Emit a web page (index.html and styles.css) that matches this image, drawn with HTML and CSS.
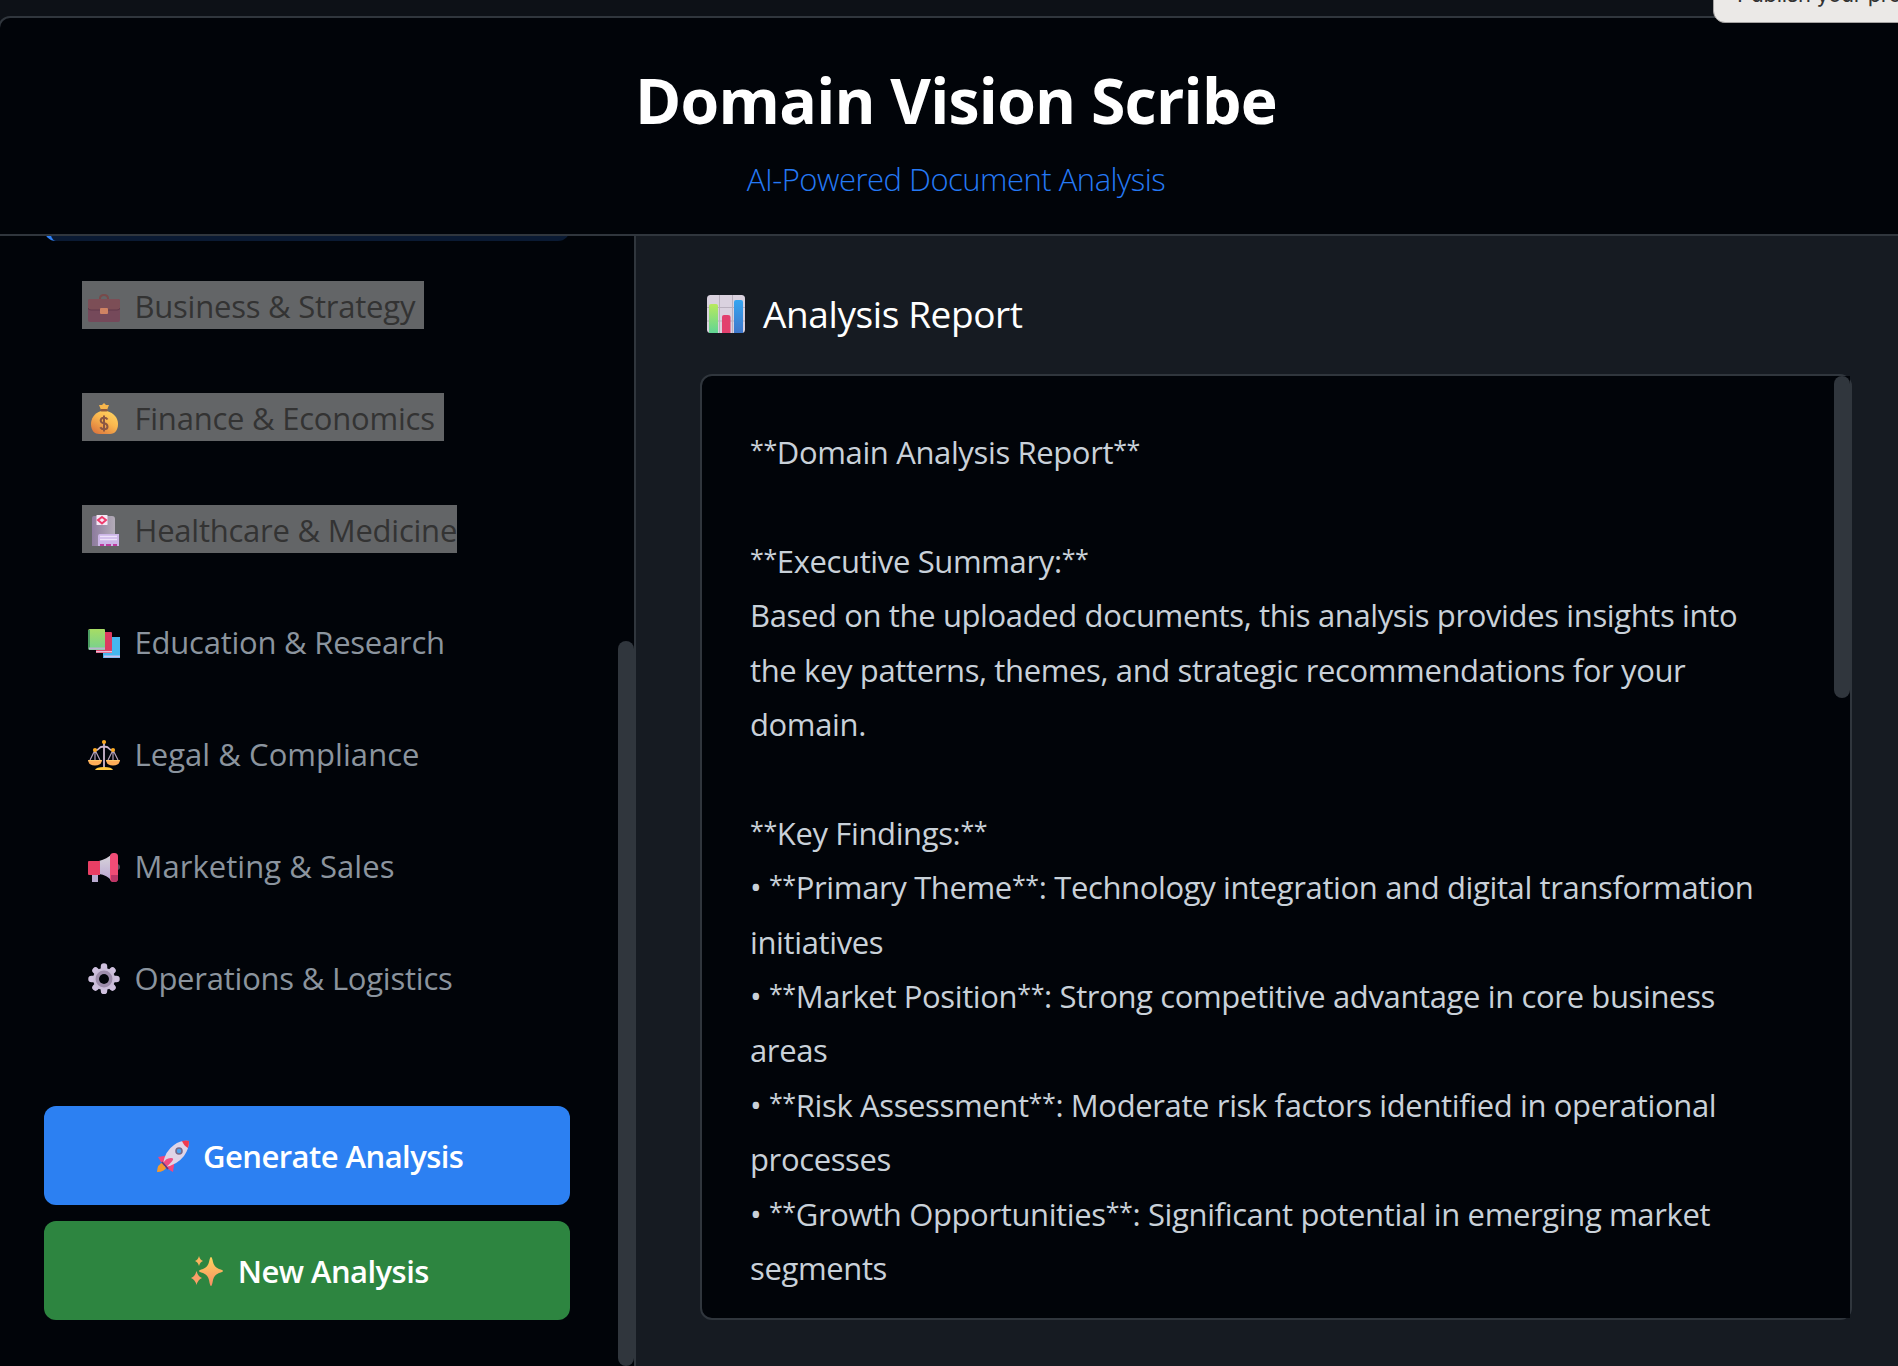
FILE: index.html
```html
<!DOCTYPE html>
<html lang="en">
<head>
  <meta charset="UTF-8">
  <meta name="viewport" content="width=device-width, initial-scale=1.0">
  <title>Domain Vision Scribe</title>
  <link rel="stylesheet" href="styles.css">
</head>
<body>
  <div class="container">
    <header class="header">
      <h1>Domain Vision Scribe</h1>
      <p class="subtitle">AI-Powered Document Analysis</p>
    </header>

    <div class="main">
      <aside class="sidebar">
        <div class="sidebar-content">
          <ul class="domain-list">
            <li class="domain-item active"></li>
            <li class="domain-item">
              <span class="label selected">
                <svg class="icon" viewBox="0 0 32 32">
                  <path d="M12 10V8.500Q12 5 16 5T20 8.500V10" fill="none" stroke="#784a4a" stroke-width="2"/>
                  <rect y="9" width="32" height="23" rx="2" fill="#75495a"/>
                  <path d="M0 11Q0 9 2 9H30Q32 9 32 11V18Q32 20 29 20H3Q0 20 0 18Z" fill="#7c4e56"/>
                  <path d="M0 18Q0 20 3 20H29Q32 20 32 18" fill="none" stroke="#60394a"/>
                  <rect x="12" y="18" width="8" height="6" rx="1" fill="#cf8363"/>
                </svg>
                Business &amp; Strategy
              </span>
            </li>
            <li class="domain-item">
              <span class="label selected">
                <svg class="icon" viewBox="0 0 32 32">
                  <defs>
                    <linearGradient id="bag" x1="1" y1="0" x2="0.300" y2="1">
                      <stop offset="0" stop-color="#ffd865"/>
                      <stop offset="0.500" stop-color="#fab84f"/>
                      <stop offset="1" stop-color="#df7c3e"/>
                    </linearGradient>
                  </defs>
                  <path d="M11 3L14 3L16 1L18 3L21 3L19 8H13Z" fill="#f7b64c"/>
                  <path d="M13 9C6 11 3 17 3 22C3 29 7 32 11 32H22C27 32 30 28 30 22C30 16 26 11 19 9Z" fill="url(#bag)"/>
                  <rect x="12.500" y="7" width="7" height="2.500" rx="1" fill="#8e5940"/>
                  <path d="M19.500 17.500Q18.500 15.700 16 15.700Q12.700 15.700 12.700 18.500Q12.700 20.700 16 21.300Q19.500 22 19.500 24.700Q19.500 27.300 16 27.300Q13.300 27.300 12.300 25.300M16 13.500V29.500" fill="none" stroke="#8b5743" stroke-width="2"/>
                </svg>
                Finance &amp; Economics
              </span>
            </li>
            <li class="domain-item">
              <span class="label selected last">
                <svg class="icon" viewBox="0 0 32 32">
                  <defs>
                    <linearGradient id="tower">
                      <stop offset="0" stop-color="#8d7b9e"/>
                      <stop offset="1" stop-color="#b3acb8"/>
                    </linearGradient>
                  </defs>
                  <path d="M4 4Q4 2 6 2H24Q27 2 27 5V32H4Z" fill="url(#tower)"/>
                  <path d="M10 22Q10 20 12 20H31V32H10Z" fill="#cdb6e8"/>
                  <path d="M12 22.500H29M12 25.500H29" stroke="#eee2fa" stroke-width="1.500"/>
                  <path d="M12 30H16V32H12ZM18 30H23V32H18ZM25 30H29V32H25Z" fill="#bd3ca0"/>
                  <rect x="8.500" y="1" width="11" height="10" rx="0.500" fill="#f4e8f5"/>
                  <path d="M14 3L18 6L14 9.500L10 6Z" fill="none" stroke="#ee3d6e" stroke-width="2"/>
                </svg>
                Healthcare &amp; Medicine
              </span>
            </li>
            <li class="domain-item">
              <span class="label">
                <svg class="icon" viewBox="0 0 32 32">
                  <defs>
                    <linearGradient id="book" x2="0" y2="1">
                      <stop offset="0" stop-color="#a7dc64"/>
                      <stop offset="1" stop-color="#75d18f"/>
                    </linearGradient>
                  </defs>
                  <path d="M15 13Q15 11 17 11H32V32H15Z" fill="#45b7ef"/>
                  <path d="M16 30.500H32" stroke="#c8bfec" stroke-width="2"/>
                  <path d="M8 8Q8 6 10 6H23Q24 6 24 7V27H8Z" fill="#dd3b60"/>
                  <path d="M8 25.700H24" stroke="#e8bfda" stroke-width="1.500"/>
                  <path d="M0 5Q0 3 2 3H16Q17 3 17 4V24H2Q0 24 0 22Z" fill="url(#book)"/>
                  <path d="M1 4V23" stroke="#4b9d61" stroke-width="2"/>
                  <path d="M1 22.500H17" stroke="#b9b5cf" stroke-width="2"/>
                </svg>
                Education &amp; Research
              </span>
            </li>
            <li class="domain-item wide">
              <span class="label">
                <svg class="icon" viewBox="0 0 32 32">
                  <path d="M16 4V31M7 12Q9 13 11 10.500T16 9Q19 8 21 10.500T25 12" fill="none" stroke="#cdb8cf" stroke-width="1.800"/>
                  <path d="M7 12L2 22M7 12V22M7 12L12 22M25 12L20 22M25 12V22M25 12L30 22" stroke="#b3a0b8" stroke-width="1.200" fill="none"/>
                  <path d="M0 22H14Q14 27 7 27.500Q0 27 0 22ZM18 22H32Q32 27 25 27.500Q18 27 18 22Z" fill="#ffae58"/>
                  <path d="M0.500 22.500H13.500M18.500 22.500H31.500" stroke="#ffc86d"/>
                  <path d="M7 32Q8 29 16 29T25 32Z" fill="#ffc83f"/>
                  <circle cx="16" cy="4" r="2.100" fill="#f9a923"/>
                  <circle cx="7" cy="12" r="2.100" fill="#f9a923"/>
                  <circle cx="25" cy="12" r="2.100" fill="#f9a923"/>
                </svg>
                Legal &amp; Compliance
              </span>
            </li>
            <li class="domain-item wide">
              <span class="label">
                <svg class="icon" viewBox="0 0 32 32">
                  <defs>
                    <linearGradient id="horn" x2="0" y2="1">
                      <stop offset="0" stop-color="#d9d6da"/>
                      <stop offset="1" stop-color="#b9a5d2"/>
                    </linearGradient>
                  </defs>
                  <circle cx="29" cy="17" r="3" fill="#554a59"/>
                  <rect x="4" y="24" width="6" height="8" fill="#b9abd0"/>
                  <path d="M11 11Q19 9 24 4V31Q19 25 11 24Z" fill="url(#horn)"/>
                  <path d="M0 12Q0 11 1 11H12V25H1Q0 25 0 24Z" fill="#e83f64"/>
                  <rect x="22" y="3" width="8" height="29" rx="3.500" fill="#f04c76"/>
                  <path d="M23 25H30V28Q30 32 26 32Q23 32 23 29Z" fill="#bb3567"/>
                </svg>
                Marketing &amp; Sales
              </span>
            </li>
            <li class="domain-item">
              <span class="label">
                <svg class="icon" viewBox="0 0 32 32">
                  <g stroke="#cfc1df" stroke-width="6.500" stroke-linecap="round">
                    <path d="M16 4.500V29M3.500 17H28.500"/>
                    <path d="M7.500 8.500L24.500 25.500M24.500 8.500L7.500 25.500"/>
                  </g>
                  <circle cx="16" cy="17" r="11" fill="#cabdd9"/>
                  <circle cx="16" cy="17" r="6.700" fill="none" stroke="#9d8dab" stroke-width="3.500"/>
                  <circle cx="16" cy="17" r="5" fill="#010409"/>
                </svg>
                Operations &amp; Logistics
              </span>
            </li>
          </ul>

          <div class="actions">
            <button class="btn btn-primary">
              <svg class="icon" viewBox="0 0 32 32">
                <path d="M7 22Q0 24 0 32Q8 32 10 26Z" fill="#f49a2e"/>
                <path d="M1 17L13 15L10 23L4 22ZM9 25L18 18L16 32L11 29Z" fill="#f5457b"/>
                <path d="M6 24Q8 11 17 5Q24 0 32 1Q32 9 27 16Q20 25 8 27Z" fill="#dfd4e7"/>
                <path d="M25 1Q29 0 32 1Q32 5 31 8Q27 6 25 1Z" fill="#ef3b4e"/>
                <path d="M6 24Q8 18 14 18T9 27Z" fill="#f04d83"/>
                <circle cx="22" cy="11" r="3" fill="#4ba2ef" stroke="#74698b" stroke-width="1.600"/>
                <path d="M5 22L11 29" stroke="#633b7a" stroke-width="1.800"/>
              </svg>
              Generate Analysis
            </button>
            <button class="btn btn-success">
              <svg class="icon" viewBox="0 0 32 32">
                <defs>
                  <linearGradient id="spark" x2="0" y2="1">
                    <stop offset="0" stop-color="#ffd45f"/>
                    <stop offset="1" stop-color="#f98e63"/>
                  </linearGradient>
                </defs>
                <path d="M20 2Q21 2 22 7Q23 12 28 14Q32 15 32 16T28 18Q23 20 22 25Q21 31 20 31T18 25Q17 20 12 18Q8 17 8 16T12 14Q17 12 18 7Q19 2 20 2Z" fill="url(#spark)"/>
                <path d="M8 1Q9 5 12 6Q9 7 8 11Q7 7 4 6Q7 5 8 1Z" fill="#fbb35f"/>
                <path d="M5.500 16Q7 21.500 11 23Q7 24.500 5.500 30Q4 24.500 0 23Q4 21.500 5.500 16Z" fill="#fb9f68"/>
              </svg>
              New Analysis
            </button>
          </div>
        </div>
        <div class="scroll-track">
          <div class="scroll-thumb sidebar-thumb"></div>
        </div>
      </aside>

      <section class="content">
        <h2>
          <svg class="icon" viewBox="0 0 38 38">
            <defs>
              <linearGradient id="barGreen" x2="0" y2="1">
                <stop offset="0" stop-color="#b8e95e"/>
                <stop offset="1" stop-color="#61d595"/>
              </linearGradient>
              <linearGradient id="barBlue" x2="0" y2="1">
                <stop offset="0" stop-color="#36a5f0"/>
                <stop offset="1" stop-color="#3f77ca"/>
              </linearGradient>
            </defs>
            <rect width="38" height="38" rx="3.500" fill="#dad2df"/>
            <path d="M0 12.500H38M0 26H38M12.500 0V38M25.500 0V38" stroke="#b9b0be"/>
            <path d="M2 38V11Q2 9 4 9H9Q11 9 11 11V38Z" fill="url(#barGreen)"/>
            <path d="M15 38V22Q15 20 17 20H21Q23.500 20 23.500 22V38Z" fill="#e2406e"/>
            <path d="M27 38V7Q27 5 29 5H34Q36 5 36 7V38Z" fill="url(#barBlue)"/>
          </svg>
          Analysis Report
        </h2>

        <div class="report">
          <div class="report-text"><i>**</i>Domain Analysis Report<i>**</i>

<i>**</i>Executive Summary:<i>**</i>
Based on the uploaded documents, this analysis provides insights into the key patterns, themes, and strategic recommendations for your domain.

<i>**</i>Key Findings:<i>**</i>
• <i>**</i>Primary Theme<i>**</i>: Technology integration and digital transformation initiatives
• <i>**</i>Market Position<i>**</i>: Strong competitive advantage in core business areas
• <i>**</i>Risk Assessment<i>**</i>: Moderate risk factors identified in operational processes
• <i>**</i>Growth Opportunities<i>**</i>: Significant potential in emerging market segments</div>
          <div class="scroll-track">
            <div class="scroll-thumb report-thumb"></div>
          </div>
        </div>
      </section>
    </div>
  </div>

  <div class="tooltip">Publish your project</div>
</body>
</html>
```
FILE: styles.css
```css
* {
  box-sizing: border-box;
  margin: 0;
  padding: 0;
}

body {
  height: 1366px;
  overflow: hidden;
  padding-top: 16px;
  background: #0d1117;
  color: #c9d1d9;
  font-family: "Segoe UI", "Open Sans", "Noto Sans", sans-serif;
  font-size: 31px;
}

.container {
  display: flex;
  flex-direction: column;
  width: 1920px;
  height: 1350px;
  margin-left: -2px;
  border: 2px solid #30363d;
  border-bottom: none;
  border-radius: 12px 12px 0 0;
  background: #010409;
  overflow: hidden;
}

.header {
  flex: none;
  height: 218px;
  padding: 44px 4px 0 0;
  border-bottom: 2px solid #30363d;
  text-align: center;
}

h1 {
  color: #fff;
  font-size: 62.5px;
  font-weight: 700;
  line-height: 76px;
  letter-spacing: -0.75px;
}

.subtitle {
  margin-top: 17px;
  color: #2579f5;
  font-weight: 300;
  line-height: 48px;
  letter-spacing: -0.5px;
}

.main {
  display: flex;
  flex: 1;
  min-height: 0;
}

/* sidebar */
.sidebar {
  display: flex;
  width: 636px;
  border-right: 2px solid #30363d;
  overflow: hidden;
}

.sidebar-content {
  flex: 1;
  padding: 0 48px 0 44px;
}

.domain-list {
  display: flex;
  flex-direction: column;
  gap: 16px;
  margin-top: -91px;
  list-style: none;
}

.domain-item {
  height: 96px;
  padding: 24px 32px;
  border-left: 6px solid transparent;
  border-radius: 12px;
  color: #8b949e;
  letter-spacing: -0.23px;
}

.domain-item.active {
  border-left-color: #2f81f7;
  background: #0a1a33;
}

.domain-item.wide {
  letter-spacing: 0.05px;
}

.label {
  display: inline-flex;
  align-items: center;
  height: 48px;
  padding: 2px 9px 0 6px;
  line-height: 46px;
  white-space: nowrap;
}

.label.last {
  padding-right: 0;
}

.label.selected {
  background: #636567;
  color: #333;
}

.icon {
  flex: none;
  width: 32px;
  height: 32px;
  margin-right: 14.5px;
}

.actions {
  display: flex;
  flex-direction: column;
  gap: 16px;
  margin-top: 81px;
}

.btn {
  display: flex;
  align-items: center;
  justify-content: center;
  height: 99px;
  padding-left: 6px;
  border: none;
  border-radius: 12px;
  color: #fff;
  font-family: inherit;
  font-size: 31px;
  font-weight: 600;
  letter-spacing: -0.55px;
}

.btn-primary {
  background: #2c80f2;
}

.btn-success {
  background: #2d8540;
}

/* scrollbars */
.scroll-track {
  width: 16px;
  background: #010409;
}

.scroll-thumb {
  border-radius: 8px;
  background: #30363d;
}

.sidebar-thumb {
  height: 725px;
  margin-top: 405px;
}

.report-thumb {
  height: 322px;
}

/* report */
.content {
  flex: 1;
  padding: 52px 64px 46px;
  background: #161b22;
}

h2 {
  display: flex;
  align-items: center;
  height: 50px;
  margin-bottom: 36px;
  padding-left: 7px;
  color: #fff;
  font-size: 37px;
  font-weight: 400;
  letter-spacing: -0.4px;
}

h2 .icon {
  width: 38px;
  height: 38px;
  margin: 2px 18px 0 0;
}

.report {
  display: flex;
  height: 946px;
  border: 2px solid #30363d;
  border-radius: 12px;
  background: #010409;
}

.report-text {
  flex: 1;
  padding: 49px 48px 0;
  line-height: 54.4px;
  letter-spacing: -0.37px;
  white-space: pre-wrap;
}

/* markdown asterisks sit smaller and higher */
.report-text i {
  position: relative;
  top: -5px;
  font-size: 25px;
  font-style: normal;
  line-height: 0;
}

.tooltip {
  position: absolute;
  top: -30px;
  left: 1713px;
  width: 240px;
  height: 53px;
  padding: 8px 23px;
  border: 1px solid #a5a3a2;
  border-radius: 12px;
  background: #ebe9e7;
  color: #333;
  font-family: Inter, sans-serif;
  font-size: 22px;
  line-height: 30px;
  letter-spacing: -0.3px;
  white-space: nowrap;
}
```
